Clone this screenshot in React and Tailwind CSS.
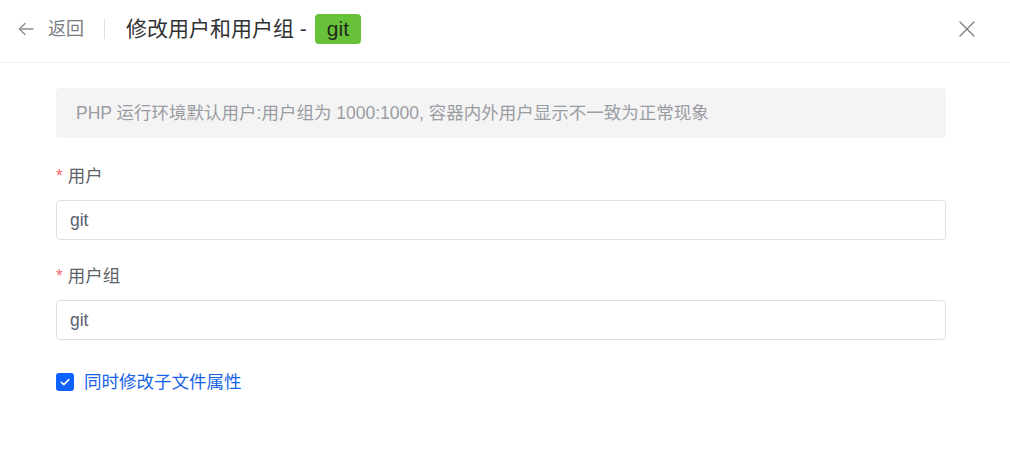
import React from "react";

const font = { fontFamily: '"Liberation Sans", "Noto Sans CJK SC", sans-serif' };

export default function App() {
  return (
    <div className="w-[1010px] h-[457px] bg-white" style={font}>
      <div className="h-[63px] pb-[5px] border-b border-[#eef0f3] flex items-center pl-[17px] pr-[34px]">
        <svg width="18" height="18" viewBox="0 0 18 18" fill="none" stroke="#8c8f96" strokeWidth="1.4" strokeLinecap="round" strokeLinejoin="round">
          <path d="M16 9H2.5" />
          <path d="M8 3.5L2.5 9L8 14.5" />
        </svg>
        <span className="ml-[13px] text-[18px] text-[#7a7d84] leading-none">返回</span>
        <div className="ml-[20px] w-px h-[20px] bg-[#dcdfe6]" />
        <span className="ml-[21px] text-[21px] text-[#303133] leading-none">修改用户和用户组 -</span>
        <span className="ml-[8px] h-[30px] px-[12px] rounded-[4px] bg-[#67c23a] text-[#1f2a1a] text-[21px] flex items-center leading-none">git</span>
        <div className="flex-1" />
        <svg width="18" height="18" viewBox="0 0 18 18" stroke="#86898f" strokeWidth="1.5" strokeLinecap="round">
          <path d="M2 2L16 16M16 2L2 16" />
        </svg>
      </div>
      <div className="px-[56px] pr-[64px] pt-[25px]">
        <div className="h-[50px] rounded-[4px] bg-[#f4f4f5] flex items-center px-[20px] text-[17.5px] text-[#9a9ca2]">
          PHP 运行环境默认用户:用户组为 1000:1000, 容器内外用户显示不一致为正常现象
        </div>
        <div className="mt-[26px] h-[24px] leading-[24px] text-[17.5px] text-[#606266] flex items-center">
          <span className="text-[#f56c6c] mr-[5px]">*</span>用户
        </div>
        <div className="mt-[12px] h-[40px] rounded-[4px] border border-[#dcdfe6] flex items-center px-[13px] text-[17.5px] text-[#5a6270]">git</div>
        <div className="mt-[24px] h-[24px] leading-[24px] text-[17.5px] text-[#606266] flex items-center">
          <span className="text-[#f56c6c] mr-[5px]">*</span>用户组
        </div>
        <div className="mt-[12px] h-[40px] rounded-[4px] border border-[#dcdfe6] flex items-center px-[13px] text-[17.5px] text-[#5a6270]">git</div>
        <div className="mt-[30px] h-[24px] flex items-center">
          <span className="w-[18px] h-[18px] rounded-[3px] bg-[#0f62fe] flex items-center justify-center">
            <svg width="12" height="12" viewBox="0 0 12 12" fill="none" stroke="white" strokeWidth="1.5" strokeLinecap="round" strokeLinejoin="round">
              <path d="M2.2 6.2L4.8 8.6L9.8 3.6" />
            </svg>
          </span>
          <span className="ml-[10px] text-[17.5px] text-[#1763e8]">同时修改子文件属性</span>
        </div>
      </div>
    </div>
  );
}
